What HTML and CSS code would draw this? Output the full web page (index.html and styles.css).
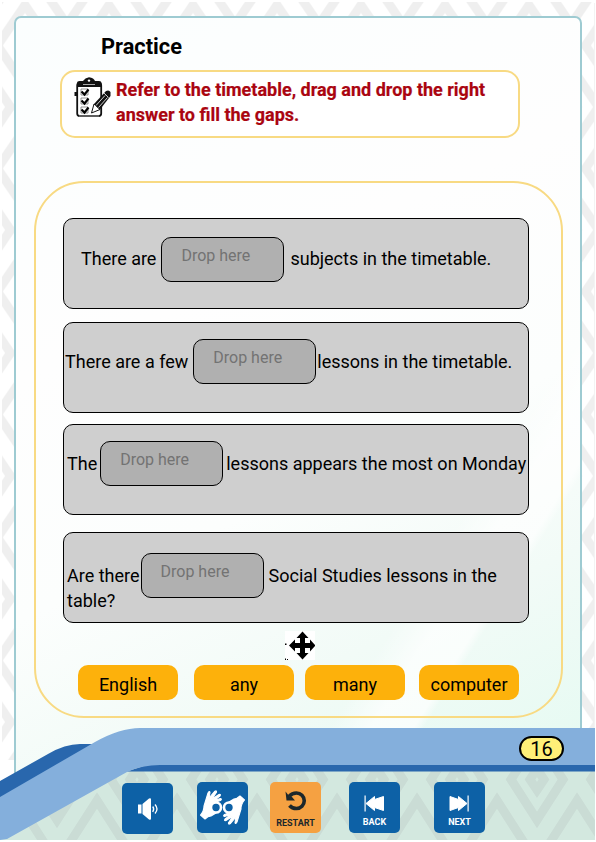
FILE: index.html
```html
<!DOCTYPE html>
<html lang="en">
<head>
<meta charset="utf-8">
<title>Practice</title>
<link rel="stylesheet" href="styles.css">
</head>
<body>
<main class="page">
  <svg class="backdrop" viewBox="0 0 596 842" aria-hidden="true">
    <defs>
      <pattern id="diamonds" x="-59" y="45.500" width="84" height="123" patternUnits="userSpaceOnUse">
        <g fill="none" stroke="#efefef" stroke-width="9">
          <path d="M42 53 48 61.500 42 70 36 61.500Z"/>
          <path d="M42 21 69.500 61.500 42 102 14.500 61.500Z"/>
          <path d="M0-40.500 27.500 0 0 40.500-27.500 0ZM84-40.500 111.500 0 84 40.500 56.500 0ZM0 82.500 27.500 123 0 163.500-27.500 123ZM84 82.500 111.500 123 84 163.500 56.500 123Z"/>
        </g>
      </pattern>
      <pattern id="diamonds-green" x="-63" y="718" width="80" height="123" patternUnits="userSpaceOnUse">
        <g fill="none" stroke="#cadcd5" stroke-width="9">
          <path d="M40 51 47 61.500 40 72 33 61.500Z"/>
          <path d="M40 21 66 61.500 40 102 14 61.500Z"/>
          <path d="M0-40.500 26 0 0 40.500-26 0ZM80-40.500 106 0 80 40.500 54 0ZM0 82.500 26 123 0 163.500-26 123ZM80 82.500 106 123 80 163.500 54 123Z"/>
        </g>
      </pattern>
    </defs>
    <path fill="url(#diamonds)" d="M2 2H594V760H2Z"/>
    <path fill="none" stroke="#f3f3f3" d="M594.500 3V728"/>
  </svg>
  <section class="panel">
    <h1 class="title">Practice</h1>
    <div class="instruction">
      <svg class="clipboard" viewBox="0 0 38 42">
        <rect x="4.200" y="6" width="24" height="33" rx="2.500" fill="#fff" stroke="#111" stroke-width="1.800"/>
        <path fill="#111" d="M4 10V6q0-2 2.500-2H10q2-3 6-3.800 5 .8 6 3.800h4q2.500 0 2.500 2v4Z"/>
        <circle cx="16" cy="3.600" r="1.200" fill="#fff"/>
        <path stroke="#aaa" d="M10 7.500H22M6 39h20"/>
        <g fill="#fff" stroke="#777" stroke-width=".8"><path d="M8 12h7v6H8ZM8 21h7v6H8ZM8 30h7v6H8Z"/></g>
        <path fill="none" stroke="#000" stroke-width="2.200" d="m8.500 14.500 3 3 4-5m-7 11 3 3 4-5m-7 11 3 3 4-5"/>
        <path fill="#111" d="M1.500 15h3v4h-3Z"/>
        <path fill="#fff" stroke="#111" d="m18.500 36 2.500-9 6 5.500Z"/>
        <path fill="#111" d="M21 27 33 14q3-1.500 4.500 1v4L27 32.500Z"/>
        <path fill="none" stroke="#fff" stroke-width=".8" d="m23 28.500 9-10m-6.500 12 9-10m-4-5 5 5"/>
      </svg>
      <p>Refer to the timetable, drag and drop the right<br>answer to fill the gaps.</p>
    </div>
    <div class="exercise">
      <div class="question q1"><div class="line"><span>There are</span><span class="drop">Drop here</span><span>subjects in the timetable.</span></div></div>
      <div class="question q2"><div class="line"><span>There are a few</span><span class="drop">Drop here</span><span>lessons in the timetable.</span></div></div>
      <div class="question q3"><div class="line"><span>The</span><span class="drop">Drop here</span><span>lessons appears the most on Monday</span></div></div>
      <div class="question q4"><div class="line"><span>Are there</span><span class="drop">Drop here</span><span>Social Studies lessons in the</span></div><div class="rest">table?</div></div>
      <svg class="move" viewBox="0 0 30 30">
        <path fill="#fff" d="M0 1H30V30H0Z"/>
        <path fill="#000" d="m17.500 1.500 6 6.500h-3.500v5h5v-3.500l5.500 6-5.500 6V18h-5v5h3.500l-6 6.500-6-6.500H15v-5h-5v3.500l-6-6 6-6V13h5V8h-3.500ZM0 13.500h1.500V15H0ZM0 28.500h1V30H0ZM2 29h1v1H2Z"/>
      </svg>
      <div class="answers">
        <button>English</button><button>any</button><button>many</button><button>computer</button>
      </div>
    </div>
  </section>
  <svg class="wave" viewBox="0 720 596 122" aria-hidden="true">
    <path fill="#d3e8df" d="M0 842V830L130 765H595V840H0Z"/>
    <path fill="url(#diamonds-green)" d="M0 842V830L130 765H595V840H0Z"/>
    <path fill="#fff" d="M0 840H596V842H0Z"/>
    <path fill="#2967ad" d="M0 781 48 754Q65 744 80 744H110L0 830ZM125 772 150 764H595V771.500H128Z"/>
    <path fill="#84afdc" d="M0 797 95 742Q120 728 140 728H595V765H160Q142 765 127 772L7 839 0 840Z"/>
  </svg>
  <div class="page-strip"><span class="page-number">16</span></div>
  <nav class="controls">
    <button class="control audio" aria-label="Audio">
      <svg viewBox="0 0 51 51"><path fill="#fff" d="M16 21.500h3.500v9H16ZM20.500 21 27 15.500q2-1 2 1v19q0 2-2 1l-6.500-5.500Z"/><path fill="none" stroke="#fff" stroke-width="1.300" d="M30.700 23.500q2 2.500 0 5.500M33 21.500q4 4.500 0 9"/></svg>
    </button>
    <button class="control sign" aria-label="Sign language">
      <svg viewBox="0 0 51 51">
        <defs>
          <g id="hand">
            <circle cx="19" cy="25.500" r="5" fill="none" stroke="#fff" stroke-width="2.600"/>
            <path fill="#fff" stroke="#fff" stroke-width="1.100" stroke-linejoin="round" d="M3.500 33Q7 29 7 24l4-13q1.500-2.500 2-.5L12 16l5.500-6.500q2.500-1.500 2 .8L15 17l7-4.500q2.300-.5 1 1.500L17 18.500l6.500-2q1.800.5 0 2l-6 2q-4 2-3.700 5 .5 4 5.200 5.500L14 34q-3 0-6 3Z"/>
          </g>
        </defs>
        <use href="#hand"/>
        <use href="#hand" transform="rotate(180 25.500 25.500)"/>
      </svg>
    </button>
    <button class="control restart">
      <svg viewBox="0 0 51 51"><path fill="none" stroke="#1c272b" stroke-width="3.600" d="M19 14.500Q22 11 26.500 11a7.500 7.500 0 0 1 0 15.500q-4.500 0-7-3"/><path fill="#1c272b" d="m15.500 9.500 1 9H25l-3-3.500-2.500-.5Z"/></svg>
      <span>RESTART</span>
    </button>
    <button class="control back">
      <svg viewBox="0 0 51 51"><path fill="#fff" d="M15.500 13.500h1.200v16h-1.200Z"/><path fill="#fff" stroke="#fff" stroke-linejoin="round" d="m17 21.500 8.500-7v3l9-3v14l-9-3v3Z"/></svg>
      <span>BACK</span>
    </button>
    <button class="control next">
      <svg viewBox="0 0 51 51"><path fill="#fff" d="M33.500 13.500h1.200v16h-1.200Z"/><path fill="#fff" stroke="#fff" stroke-linejoin="round" d="m33 21.500-8.500-7v3l-8.500-3v14l8.500-3v3Z"/></svg>
      <span>NEXT</span>
    </button>
  </nav>
</main>
</body>
</html>
```
FILE: styles.css
```css
* { box-sizing: border-box; }
body { margin: 0; background: #fff; font-family: Roboto, sans-serif; color: #000; }
.page { position: relative; width: 596px; height: 842px; overflow: hidden; display: flex; flex-direction: column; }
.backdrop { position: absolute; inset: 0; width: 596px; height: 842px; }
.panel {
  position: relative; flex: none; width: 568px; height: 784px; margin: 16px 0 0 14px; margin-bottom: -72px;
  border: 2px solid #9ecbd2; border-radius: 7px; padding: 17px 17px 0 18px;
  background:
    linear-gradient(122deg, transparent 72%, #ffffffb0 76%, #ffffffb0 80%, transparent 81%),
    linear-gradient(155deg, #fbfefe 0%, #fefefe 35%, #fcfefd 58%, #f2fbf7 76%, #e3faf1 100%);
}
.title { margin: 0 0 0 67px; font-size: 21.8px; line-height: 24px; font-weight: 700; }
.instruction {
  display: flex; width: 460px; height: 68px; margin: 11px 0 0 26px; padding: 5px 0 0 11px;
  border: 2px solid #f8da83; border-radius: 15px; background: #fff;
}
.clipboard { width: 38px; height: 42px; flex: none; }
.instruction p { margin: 0 0 0 5px; color: #aa0510; font-size: 18px; font-weight: 700; line-height: 25px; white-space: nowrap; -webkit-text-stroke: .2px #aa0510; }
.exercise {
  width: 529px; height: 537px; margin-top: 43px; padding: 35px 32px 0 27px;
  border: 2px solid #f8da83; border-radius: 50px; display: flex; flex-direction: column;
}
.question {
  flex: none; width: 466px; height: 91px; border: 1px solid #000; border-radius: 10px; background: #cfcfcf;
  font-size: 18px; line-height: 25px; white-space: nowrap; padding: 18px 0 0 3px;
}
.line { display: flex; align-items: center; height: 45px; }
.q1 { padding-left: 17px; }
.q1 .line > span:not(.drop) { margin-bottom: 3px; }
.q2 { margin-top: 13px; padding: 16px 0 0 1px; }
.q3 { margin-top: 11px; padding-top: 16px; }
.q4 { margin-top: 17px; padding-top: 20px; }
.rest { margin-top: -10px; }
.drop {
  width: 123px; height: 45px; margin: 0 6px 0 5px; padding: 5px 0 0 19px; border: 1px solid #000;
  border-radius: 10px; background: #b0b0b0; color: #737373; font-size: 16px;
}
.q2 .drop { margin-right: 1px; }
.q3 .drop { margin: 0 3px; }
.q4 .drop { margin: 0 5px 0 1px; }
.move { width: 30px; height: 30px; flex: none; margin: 7px 0 0 222px; }
.answers { display: flex; margin: 5px 0 0 15px; }
.answers button {
  width: 100px; height: 35px; flex: none; padding: 4px 0 0; border: 0; border-radius: 10px; background: #fdb10b;
  color: #000; font: 18px/25px Roboto, sans-serif;
}
.answers button:nth-child(2) { margin: 0 11px 0 16px; }
.answers button:nth-child(4) { margin-left: 14px; }
.wave { position: absolute; left: 0; bottom: 0; width: 596px; height: 122px; }
.page-strip { position: relative; height: 37px; flex: none; display: flex; justify-content: flex-end; padding: 8px 32px 0 0; }
.page-number {
  width: 45px; height: 25px; border: 2px solid #000; border-radius: 13px; background: #fff078;
  font-size: 20px; line-height: 22px; text-align: center;
}
.controls { position: relative; display: flex; padding: 17px 0 0 122px; }
.control {
  position: relative; width: 51px; height: 51px; flex: none; padding: 0; border: 0; border-radius: 5px;
  background: #0d61a6; color: #fff; font: 700 9px/10px Roboto, sans-serif; text-align: center;
}
.control span { display: block; margin-top: 29px; }
.control svg { position: absolute; inset: 0; width: 51px; height: 51px; }
.audio { margin-top: 1px; }
.sign { margin-left: 24px; }
.restart { margin-left: 22px; background: #f5a142; color: #1c272b; }
.restart span { margin-top: 31px; }
.back { margin-left: 28px; }
.next { margin-left: 34px; }
```
